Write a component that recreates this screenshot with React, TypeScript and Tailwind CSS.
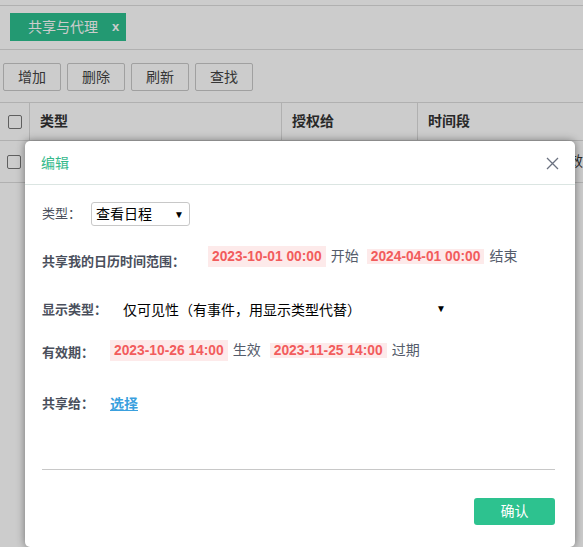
import React from 'react';

const font = "font-['Liberation_Sans','Noto_Sans_CJK_SC',sans-serif]";

function DateTag({ text }: { text: string }) {
  return (
    <span className="h-[21px] px-[4px] bg-[#fdeaea] text-[#f25c5c] font-bold text-[13.8px] leading-[21px] whitespace-nowrap">
      {text}
    </span>
  );
}

function CloseIcon() {
  return (
    <svg width="13" height="13" viewBox="0 0 13 13" fill="none">
      <path d="M1 1L12 12M12 1L1 12" stroke="#6b7180" strokeWidth="1.3" />
    </svg>
  );
}

export default function App() {
  const buttons = ['增加', '删除', '刷新', '查找'];

  return (
    <div className={`relative w-[583px] h-[547px] overflow-hidden bg-white ${font}`}>
      {/* background page */}
      <div className="h-[6px] border-b border-[#dcdcdc]" />
      <div className="h-[44px] border-b border-[#dcdcdc] pt-[7px] pl-[10px]">
        <div className="flex items-center w-[116px] h-[28px] bg-[#2cc08f] text-white text-[14px] pl-[18px]">
          <span>共享与代理</span>
          <span className="ml-[14px] font-bold text-[13px]">x</span>
        </div>
      </div>
      <div className="flex gap-[6px] pl-[3px] pt-[13px] h-[52px]">
        {buttons.map((b) => (
          <button
            key={b}
            className="w-[58px] h-[28px] border border-[#c8c8c8] rounded-[2px] bg-white text-[14px] text-[#444]"
          >
            {b}
          </button>
        ))}
      </div>
      <div className="border-t border-[#dcdcdc]">
        <div className="flex h-[38px] border-b border-[#dcdcdc] text-[14px] font-bold text-[#333]">
          <div className="w-[30px] flex items-center justify-center border-r border-[#dcdcdc]">
            <span className="w-[14px] h-[14px] border border-[#777] rounded-[2px] bg-white" />
          </div>
          <div className="w-[252px] flex items-center pl-[10px] border-r border-[#dcdcdc]">类型</div>
          <div className="w-[136px] flex items-center pl-[10px] border-r border-[#dcdcdc]">授权给</div>
          <div className="flex-1 flex items-center pl-[10px]">时间段</div>
        </div>
        <div className="flex h-[42px] border-b border-[#dcdcdc] text-[14px] text-[#333]">
          <div className="w-[30px] flex items-center justify-center border-r border-[#dcdcdc]">
            <span className="w-[14px] h-[14px] border border-[#777] rounded-[2px] bg-white" />
          </div>
          <div className="w-[252px] border-r border-[#dcdcdc]" />
          <div className="w-[136px] border-r border-[#dcdcdc]" />
          <div className="flex-1 flex items-center pl-[146px] whitespace-nowrap">
            <span>生效</span>
          </div>
        </div>
      </div>

      {/* dim overlay */}
      <div className="absolute inset-0 bg-black/20" />

      {/* modal */}
      <div className="absolute left-[25px] top-[141px] w-[550px] h-[406px] bg-white rounded-[5px] shadow-[0_0_8px_rgba(0,0,0,0.45)]">
        <div className="flex items-center justify-between h-[44px] border-b border-[#dbe5e2] pl-[16px] pr-[16px] pt-[2px]">
          <span className="text-[14px] text-[#35b98b]">编辑</span>
          <CloseIcon />
        </div>

        <div className="pl-[17px] pr-[20px] text-[13px] text-[#4a4f5c]">
          <div className="flex items-center h-[24px] mt-[17px]">
            <span className="w-[49px]">类型：</span>
            <div className="flex items-center justify-between w-[99px] h-[24px] border border-[#c8c8c8] rounded-[3px] pl-[4px] pr-[5px] text-[14px] text-black">
              <span>查看日程</span>
              <span className="text-[10px]">▼</span>
            </div>
          </div>

          <div className="flex items-start h-[26px] mt-[20px]">
            <span className="w-[166px] mt-[6px] font-bold">共享我的日历时间范围：</span>
            <DateTag text="2023-10-01 00:00" />
            <span className="ml-[5px] text-[14px] leading-[21px] text-[#555c6b]">开始</span>
            <span className="ml-[8px]"><DateTag text="2024-04-01 00:00" /></span>
            <span className="ml-[5px] text-[14px] leading-[21px] text-[#555c6b]">结束</span>
          </div>

          <div className="flex items-center h-[20px] mt-[28px]">
            <span className="w-[81px] font-bold">显示类型：</span>
            <div className="flex items-center justify-between w-[323px] text-[14px] text-black">
              <span>仅可见性（有事件，用显示类型代替）</span>
              <span className="text-[10px] -mt-[4px]">▼</span>
            </div>
          </div>

          <div className="flex items-start h-[22px] mt-[20px]">
            <span className="w-[68px] mt-[3px] font-bold">有效期：</span>
            <DateTag text="2023-10-26 14:00" />
            <span className="ml-[5px] text-[14px] leading-[21px] text-[#555c6b]">生效</span>
            <span className="ml-[9px]"><DateTag text="2023-11-25 14:00" /></span>
            <span className="ml-[5px] text-[14px] leading-[21px] text-[#555c6b]">过期</span>
          </div>

          <div className="flex items-center h-[20px] mt-[32px]">
            <span className="w-[68px] font-bold">共享给：</span>
            <a className="text-[14px] font-bold text-[#3aa0de] underline">选择</a>
          </div>

          <div className="mt-[55px] border-t border-[#c8c8c8]" />

          <div className="flex justify-end mt-[28px]">
            <button className="w-[81px] h-[27px] rounded-[3px] bg-[#2dc28f] text-white text-[14px]">
              确认
            </button>
          </div>
        </div>
      </div>
    </div>
  );
}
